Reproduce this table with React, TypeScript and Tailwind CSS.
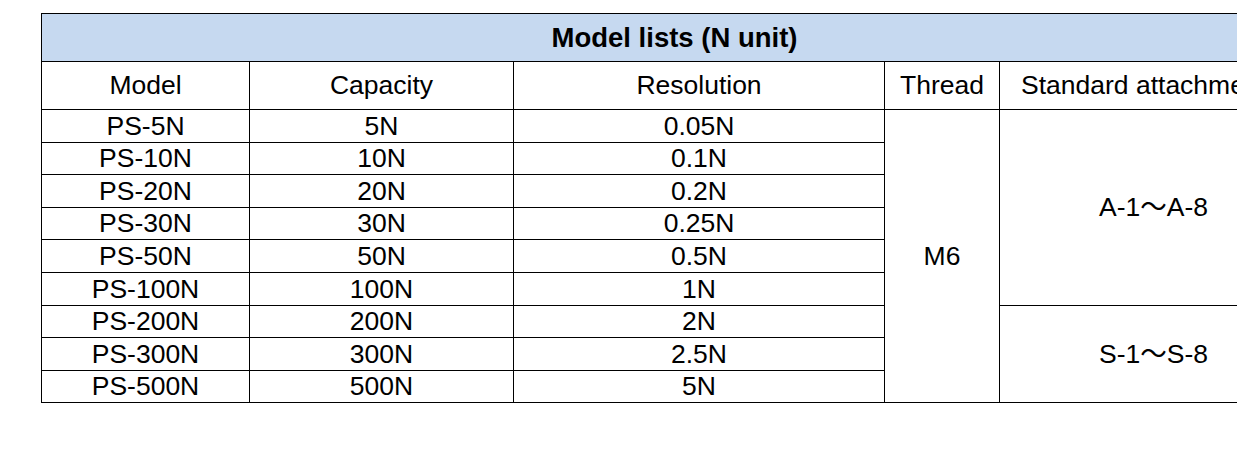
const rows = [
  { model: "PS-5N", capacity: "5N", resolution: "0.05N" },
  { model: "PS-10N", capacity: "10N", resolution: "0.1N" },
  { model: "PS-20N", capacity: "20N", resolution: "0.2N" },
  { model: "PS-30N", capacity: "30N", resolution: "0.25N" },
  { model: "PS-50N", capacity: "50N", resolution: "0.5N" },
  { model: "PS-100N", capacity: "100N", resolution: "1N" },
  { model: "PS-200N", capacity: "200N", resolution: "2N" },
  { model: "PS-300N", capacity: "300N", resolution: "2.5N" },
  { model: "PS-500N", capacity: "500N", resolution: "5N" },
];

const cell = "border border-black p-0 text-center align-middle";

export default function App() {
  return (
    <div
      className="min-h-[456px] bg-white pt-[13px] pl-[41px] text-[26.5px] leading-none text-black"
      style={{ fontFamily: '"Liberation Sans", "Noto Sans CJK JP", Arial, sans-serif' }}
    >
      <div className="w-[1196px] overflow-hidden">
        <table className="w-[1266px] table-fixed border-collapse">
          <colgroup>
            <col className="w-[208px]" />
            <col className="w-[264px]" />
            <col className="w-[371px]" />
            <col className="w-[115px]" />
            <col className="w-[308px]" />
          </colgroup>
          <thead>
            <tr className="h-[48px]">
              <th colSpan={5} className={`${cell} bg-[#c6d9f0] text-[27.5px] font-bold`}>
                Model lists (N unit)
              </th>
            </tr>
            <tr className="h-[48px]">
              <th className={`${cell} font-normal`}>Model</th>
              <th className={`${cell} font-normal`}>Capacity</th>
              <th className={`${cell} font-normal`}>Resolution</th>
              <th className={`${cell} font-normal`}>Thread</th>
              <th className={`${cell} pl-[21px] text-left font-normal whitespace-nowrap`}>
                Standard attachments
              </th>
            </tr>
          </thead>
          <tbody>
            {rows.map((row, index) => (
              <tr key={row.model} className="h-[32.6px]">
                <td className={cell}>{row.model}</td>
                <td className={cell}>{row.capacity}</td>
                <td className={cell}>{row.resolution}</td>
                {index === 0 && (
                  <td rowSpan={9} className={cell}>
                    M6
                  </td>
                )}
                {index === 0 && (
                  <td rowSpan={6} className={cell}>
                    A-1～A-8
                  </td>
                )}
                {index === 6 && (
                  <td rowSpan={3} className={cell}>
                    S-1～S-8
                  </td>
                )}
              </tr>
            ))}
          </tbody>
        </table>
      </div>
    </div>
  );
}
